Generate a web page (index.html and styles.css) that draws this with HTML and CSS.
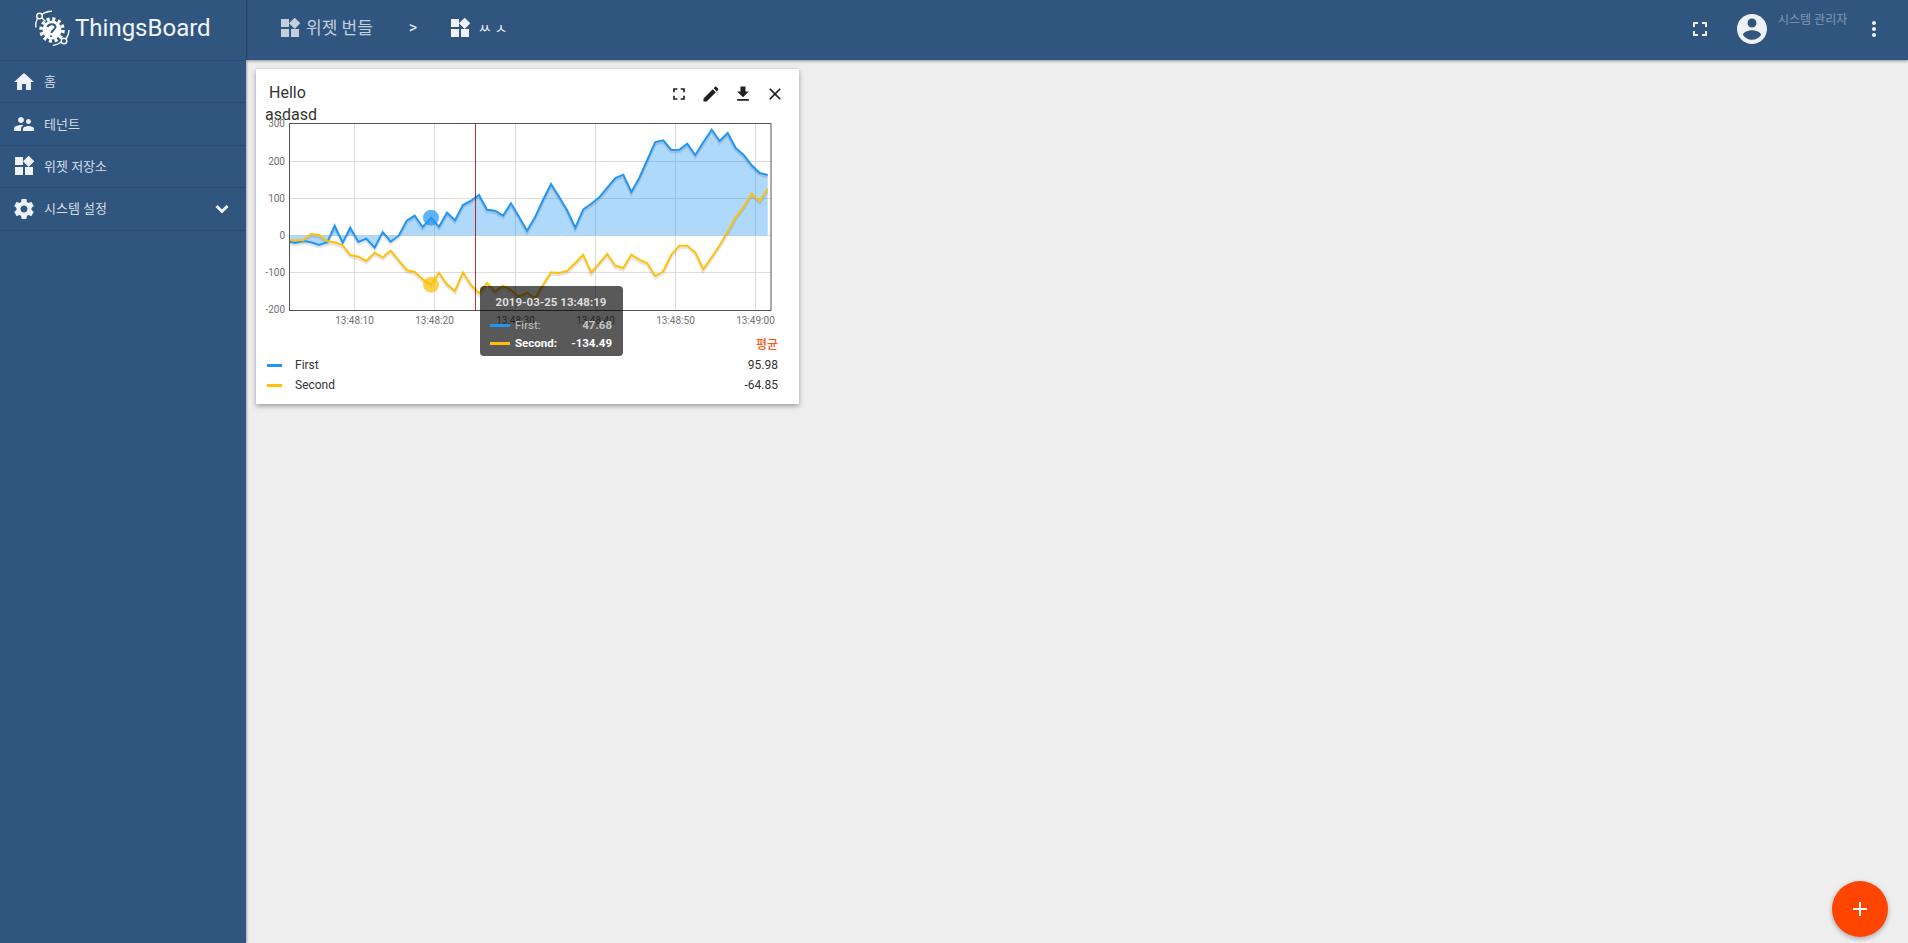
FILE: index.html
```html
<!DOCTYPE html>
<html lang="ko">
<head>
  <meta charset="UTF-8">
  <title>ThingsBoard</title>
  <link rel="stylesheet" href="styles.css">
</head>
<body>
  <aside class="sidebar">
    <div class="logo">
      <svg class="logo-mark" viewBox="30 5 44 42" width="44" height="42">
        <circle cx="52" cy="28" r="9.5" fill="#fff"/>
        <circle cx="52" cy="28" r="11" fill="none" stroke="#fff" stroke-width="3.5" stroke-dasharray="3 2.76"/>
        <path d="M47.5 25c1-3 7-4 8 -.5 .8 3 -4 3.5 -4 6.5M51 33.5v1.5" fill="none" stroke="#305680" stroke-width="2"/>
        <circle cx="39.5" cy="14" r="2.8" fill="none" stroke="#fff" stroke-width="1.4"/>
        <path d="M42 12.5c3-2.4 6-3 10-3.2M37.6 16c-1.600 3-2.400 6-1.800 9.500M42 16l3.500 3.500" fill="none" stroke="#fff" stroke-width="1.400"/>
        <circle cx="64" cy="39" r="2.800" fill="none" stroke="#fff" stroke-width="1.400"/>
        <path d="M61.300 40c-2.500 2-5 3-8.500 3.400M66 37c2-3 3-5.500 3-9M61.500 37l-3-2.500" fill="none" stroke="#fff" stroke-width="1.400"/>
      </svg>
      <span class="logo-text">ThingsBoard</span>
    </div>
    <nav class="menu">
      <a class="menu-item">
        <svg class="icon" viewBox="0 0 24 24"><path d="M10 20v-6h4v6h5v-8h3L12 3 2 12h3v8z"/></svg>
        <span>홈</span>
      </a>
      <a class="menu-item">
        <svg class="icon" viewBox="0 0 24 24"><path d="M16.500 12c1.380 0 2.490-1.120 2.490-2.500S17.880 7 16.500 7C15.120 7 14 8.120 14 9.500s1.120 2.500 2.500 2.500zM9 11c1.660 0 2.990-1.340 2.990-3S10.660 5 9 5C7.340 5 6 6.340 6 8s1.340 3 3 3zm7.500 3c-1.830 0-5.500.92-5.500 2.750V19h11v-2.250c0-1.830-3.670-2.750-5.500-2.750zM9 13c-2.330 0-7 1.170-7 3.500V19h7v-2.250c0-.85.33-2.340 2.370-3.470C10.500 13.100 9.660 13 9 13z"/></svg>
        <span>테넌트</span>
      </a>
      <a class="menu-item">
        <svg class="icon" viewBox="0 0 24 24"><path d="M13 13v8h8v-8h-8zM3 21h8v-8H3v8zM3 3v8h8V3H3zm13.660-1.310L11 7.340 16.660 13l5.660-5.660-5.660-5.650z"/></svg>
        <span>위젯 저장소</span>
      </a>
      <a class="menu-item">
        <svg class="icon" viewBox="0 0 24 24"><path d="M19.430 12.980c.04-.32.07-.64.07-.98s-.03-.66-.07-.98l2.110-1.650c.19-.15.24-.42.12-.64l-2-3.460c-.12-.22-.39-.3-.61-.22l-2.490 1c-.52-.4-1.080-.73-1.690-.98l-.38-2.650C14.460 2.180 14.250 2 14 2h-4c-.25 0-.46.18-.49.42l-.38 2.650c-.61.25-1.170.59-1.690.98l-2.490-1c-.23-.09-.49 0-.61.22l-2 3.460c-.13.22-.07.49.12.64l2.110 1.650c-.04.32-.07.65-.07.98s.03.66.07.98l-2.110 1.650c-.19.15-.24.42-.12.64l2 3.460c.12.22.39.3.61.22l2.490-1c.52.4 1.080.73 1.690.98l.38 2.650c.03.24.24.42.49.42h4c.25 0 .46-.18.49-.42l.38-2.650c.61-.25 1.170-.59 1.690-.98l2.490 1c.23.09.49 0 .61-.22l2-3.460c.12-.22.07-.49-.12-.64l-2.110-1.650zM12 15.500c-1.930 0-3.500-1.570-3.500-3.500s1.570-3.500 3.500-3.500 3.500 1.570 3.500 3.500-1.570 3.500-3.500 3.500z"/></svg>
        <span>시스템 설정</span>
        <svg class="chevron" viewBox="0 0 14 10" width="14" height="10"><path d="M1.500 2l5.500 5.500L12.500 2" fill="none" stroke="#eef1f5" stroke-width="3"/></svg>
      </a>
    </nav>
  </aside>

  <div class="main">
    <header class="topbar">
      <svg class="icon crumb-icon dim" viewBox="0 0 24 24"><path d="M13 13v8h8v-8h-8zM3 21h8v-8H3v8zM3 3v8h8V3H3zm13.660-1.310L11 7.340 16.660 13l5.660-5.660-5.660-5.650z"/></svg>
      <span class="crumb dim-text">위젯 번들</span>
      <span class="crumb-sep">&gt;</span>
      <svg class="icon crumb-icon" viewBox="0 0 24 24"><path d="M13 13v8h8v-8h-8zM3 21h8v-8H3v8zM3 3v8h8V3H3zm13.660-1.310L11 7.340 16.660 13l5.660-5.660-5.660-5.650z"/></svg>
      <span class="crumb crumb-current">ㅆ ㅅ</span>

      <div class="topbar-right">
        <svg class="icon" viewBox="0 0 24 24"><path d="M7 14H5v5h5v-2H7v-3zm-2-4h2V7h3V5H5v5zm12 7h-3v2h5v-5h-2v3zM14 5v2h3v3h2V5h-5z"/></svg>
        <svg class="icon avatar" viewBox="0 0 24 24"><path d="M12 2C6.480 2 2 6.480 2 12s4.480 10 10 10 10-4.480 10-10S17.520 2 12 2zm0 3c1.660 0 3 1.340 3 3s-1.340 3-3 3-3-1.340-3-3 1.340-3 3-3zm0 14.200c-2.500 0-4.710-1.280-6-3.220.03-1.990 4-3.080 6-3.080 1.990 0 5.970 1.090 6 3.080-1.290 1.940-3.500 3.220-6 3.220z"/></svg>
        <span class="user-name">시스템 관리자</span>
        <svg class="icon more" viewBox="0 0 24 24"><path d="M12 8c1.100 0 2-.9 2-2s-.9-2-2-2-2 .9-2 2 .9 2 2 2zm0 2c-1.100 0-2 .9-2 2s.9 2 2 2 2-.9 2-2-.9-2-2-2zm0 6c-1.100 0-2 .9-2 2s.9 2 2 2 2-.9 2-2-.9-2-2-2z"/></svg>
      </div>
    </header>

    <section class="content">
      <article class="widget">
        <div class="widget-head">
          <div class="widget-title">
            <div class="title-main">Hello</div>
            <div class="title-sub">asdasd</div>
          </div>
          <div class="widget-actions">
            <button class="action"><svg viewBox="0 0 24 24"><path d="M7 14H5v5h5v-2H7v-3zm-2-4h2V7h3V5H5v5zm12 7h-3v2h5v-5h-2v3zM14 5v2h3v3h2V5h-5z"/></svg></button>
            <button class="action"><svg viewBox="0 0 24 24"><path d="M3 17.250V21h3.750L17.810 9.940l-3.750-3.750L3 17.250zM20.710 7.040c.39-.39.39-1.020 0-1.410l-2.340-2.340c-.39-.39-1.020-.39-1.410 0l-1.830 1.830 3.750 3.750 1.830-1.830z"/></svg></button>
            <button class="action"><svg viewBox="0 0 24 24"><path d="M19 9h-4V3H9v6H5l7 7 7-7zM5 18v2h14v-2H5z"/></svg></button>
            <button class="action"><svg viewBox="0 0 24 24"><path d="M19 6.410L17.590 5 12 10.590 6.410 5 5 6.410 10.590 12 5 17.590 6.410 19 12 13.410 17.590 19 19 17.590 13.410 12z"/></svg></button>
          </div>
        </div>

        <!-- viewBox uses page coordinates so the points read like the screen -->
        <svg class="chart" viewBox="256 115 543 215" width="543" height="215">
          <defs>
            <polyline id="lineFirst" fill="none" points="289.3,241.700 295,243 303.300,241 311,242.300 319,245 327.300,242.300 334.700,225.700 342.700,242.700 350.300,227.700 358.300,242 366.300,238.700 374.700,247.700 382.700,232 390.700,241.700 398.700,235.700 406.700,220.700 414.700,215.700 422.700,227 431,217.700 439,226.700 447,212.700 455,220.300 463,205 471,200.700 479,195 487,209.700 495,210.700 503,215.700 511,203.300 519,216.700 527,230.700 535,217.300 543,200 551,184 559,196.700 567,210 575.300,227.700 583.300,209.300 591.300,203.700 599.300,197.300 607.300,187.700 615.300,178 623.300,174.700 631.300,192 639.300,178 647.300,160 655.300,142 663.300,140.300 671.300,150 679.300,149.700 687.300,143.700 695.300,155 703.300,142.300 711.700,129.700 719.700,141 727.700,133 735.700,148 743.700,155 751.700,165.300 759.700,173 767.700,175"/>
            <polyline id="lineSecond" fill="none" points="289.3,240.300 295,240.300 303.300,240.300 311,234 319,235 327.300,241 334.700,242.300 342.700,245 350.300,255 358.300,256.700 366.300,261 374.700,252.700 382.700,257.300 390.700,250.700 398.700,260.300 406.700,270 414.700,272 422.700,279.300 431,284.700 439,272.700 447,284.300 455,291 463,272.300 471,285 479,293.300 487,283 495,291.700 503,285.700 511,290 519,296.700 527,292.700 535,298.300 543,285 551,272.300 559,273 567,271 575.300,263 583.300,254.700 591.300,272.700 599.300,263.300 607.300,254 615.300,265.700 623.300,268 631.300,254.700 639.300,259.700 647.300,263.300 655.300,276 663.300,271.300 671.300,254.700 679.300,245.700 687.300,245.700 695.300,252.300 703.300,269.300 711.700,257.300 719.700,245.300 727.700,231.700 735.700,217.300 743.700,206.700 751.700,193.700 759.700,201 767.700,188.700"/>
          </defs>

          <g class="grid">
            <path d="M354.500 123.500V310.500M434.500 123.500V310.500M515.500 123.500V310.500M595.500 123.500V310.500M675.500 123.500V310.500M755.500 123.500V310.500"/>
            <path d="M289.500 161.500H771M289.500 198.500H771M289.500 235.500H771M289.500 272.500H771"/>
          </g>

          <polygon class="area" points="289.3,235.500 289.3,241.700 295,243 303.300,241 311,242.300 319,245 327.300,242.300 334.700,225.700 342.700,242.700 350.300,227.700 358.300,242 366.300,238.700 374.700,247.700 382.700,232 390.700,241.700 398.700,235.700 406.700,220.700 414.700,215.700 422.700,227 431,217.700 439,226.700 447,212.700 455,220.300 463,205 471,200.700 479,195 487,209.700 495,210.700 503,215.700 511,203.300 519,216.700 527,230.700 535,217.300 543,200 551,184 559,196.700 567,210 575.300,227.700 583.300,209.300 591.300,203.700 599.300,197.300 607.300,187.700 615.300,178 623.300,174.700 631.300,192 639.300,178 647.300,160 655.300,142 663.300,140.300 671.300,150 679.300,149.700 687.300,143.700 695.300,155 703.300,142.300 711.700,129.700 719.700,141 727.700,133 735.700,148 743.700,155 751.700,165.300 759.700,173 767.700,175 767.700,235.500"/>

          <use href="#lineFirst" class="line-shadow"/>
          <use href="#lineSecond" class="line-shadow"/>
          <use href="#lineFirst" class="line-first"/>
          <use href="#lineSecond" class="line-second"/>

          <rect class="frame" x="289.500" y="123.500" width="481.500" height="187"/>
          <line class="crosshair" x1="475.500" y1="123.500" x2="475.500" y2="310.500"/>

          <circle class="dot-first" cx="431" cy="217.700" r="8"/>
          <circle class="dot-second" cx="431" cy="284.700" r="8"/>

          <g class="tick tick-y">
            <text x="285" y="127">300</text>
            <text x="285" y="164.500">200</text>
            <text x="285" y="201.500">100</text>
            <text x="285" y="239">0</text>
            <text x="285" y="276">-100</text>
            <text x="285" y="313">-200</text>
          </g>
          <g class="tick tick-x">
            <text x="354.500" y="324">13:48:10</text>
            <text x="434.500" y="324">13:48:20</text>
            <text x="515.500" y="324">13:48:30</text>
            <text x="595.500" y="324">13:48:40</text>
            <text x="675.500" y="324">13:48:50</text>
            <text x="755.500" y="324">13:49:00</text>
          </g>
        </svg>

        <div class="legend">
          <div class="legend-head">평균</div>
          <div class="legend-row">
            <i class="swatch swatch-first"></i>
            <span class="legend-name">First</span>
            <span class="legend-value">95.98</span>
          </div>
          <div class="legend-row">
            <i class="swatch swatch-second"></i>
            <span class="legend-name">Second</span>
            <span class="legend-value">-64.85</span>
          </div>
        </div>

        <div class="tooltip">
          <div class="tooltip-time">2019-03-25 13:48:19</div>
          <div class="tooltip-row tooltip-row-dim">
            <i class="swatch swatch-first"></i>
            <span>First:</span>
            <b>47.68</b>
          </div>
          <div class="tooltip-row">
            <i class="swatch swatch-second"></i>
            <b>Second:</b>
            <b>-134.49</b>
          </div>
        </div>
      </article>
    </section>
  </div>

  <button class="fab"><svg viewBox="0 0 14 14" width="14" height="14"><path d="M6 0h2v6h6v2H8v6H6V8H0V6h6z"/></svg></button>
</body>
</html>
```

FILE: styles.css
```css
/* page */
html, body {
  height: 100%;
}
body {
  margin: 0;
  display: flex;
  height: 943px;
  overflow: hidden;
  background-color: #eeeeee;
  font-family: Roboto, "Noto Sans CJK KR", sans-serif;
  color: #212121;
}

.icon {
  width: 24px;
  height: 24px;
  fill: #eef1f5;
  flex: none;
}

/* sidebar */
.sidebar {
  width: 246px;
  flex: none;
  background-color: #305680;
  box-shadow: 1px 0 2px rgba(0, 0, 0, 0.3);
  z-index: 2;
}
.logo {
  height: 60px;
  display: flex;
  align-items: center;
  padding-left: 30px;
  border-bottom: 1px solid #2a4c72;
}
.logo-mark {
  flex: none;
  margin-top: -4px;
}
.logo-text {
  margin-left: 1px;
  margin-top: -5px;
  font-size: 24px;
  color: #f1f4f7;
}
.menu-item {
  height: 41.400px;
  display: flex;
  align-items: center;
  padding-left: 12px;
  border-bottom: 1px solid #2a4c72;
  font-size: 13px;
  color: #d5dce5;
}
.menu-item span {
  margin-left: 8px;
  margin-top: -2px;
}
.chevron {
  margin-left: auto;
  margin-right: 17px;
}

/* top bar */
.main {
  flex: 1;
  min-width: 0;
  display: flex;
  flex-direction: column;
}
.topbar {
  height: 60px;
  flex: none;
  display: flex;
  align-items: center;
  padding-left: 32px;
  padding-bottom: 2px;
  box-sizing: border-box;
  background-color: #305680;
  box-shadow: 0 1px 3px rgba(0, 0, 0, 0.4);
  z-index: 1;
}
.crumb-icon {
  margin-top: -3px;
}
.dim {
  fill: #c3cfdc;
}
.crumb {
  margin-left: 4px;
  margin-top: -5px;
  font-size: 17px;
}
.dim-text {
  color: #c3cfdc;
}
.crumb-sep {
  margin: -3px 31px 0 36px;
  font-size: 16px;
  color: #eef1f5;
}
.crumb-current {
  margin-left: 6px;
  font-size: 14px;
  color: #eef1f5;
}
.topbar-right {
  margin-left: auto;
  display: flex;
  align-items: center;
  padding-right: 22px;
}
.avatar {
  width: 36px;
  height: 36px;
  margin-left: 22px;
}
.user-name {
  margin-left: 8px;
  margin-top: -21px;
  width: 84px;
  font-size: 12px;
  color: #8298b2;
}

/* widget */
.content {
  flex: 1;
  padding: 9px 10px;
}
.widget {
  position: relative;
  width: 543px;
  height: 335px;
  background-color: #fff;
  box-shadow: 0 2px 5px rgba(0, 0, 0, 0.35);
}
.widget-head {
  height: 46px;
  display: flex;
  justify-content: space-between;
  padding-right: 8px;
}
.widget-title {
  padding-top: 13px;
  font-size: 16px;
  line-height: 22px;
  color: #333;
}
.title-main {
  margin-left: 13px;
}
.title-sub {
  margin-left: 9px;
}
.widget-actions {
  display: flex;
  padding-top: 9px;
}
.action {
  width: 32px;
  height: 32px;
  padding: 6px;
  border: none;
  background: none;
}
.action svg {
  display: block;
  width: 20px;
  height: 20px;
  fill: #212121;
}

/* chart */
.chart {
  display: block;
  position: relative;
}
.grid path {
  fill: none;
  stroke: #dcdcdc;
  stroke-width: 1;
}
.area {
  fill: rgba(33, 150, 243, 0.36);
}
.line-shadow {
  stroke: rgba(0, 0, 0, 0.1);
  stroke-width: 3;
  transform: translate(0, 2px);
}
.line-first {
  stroke: #2196f3;
  stroke-width: 2;
}
.line-second {
  stroke: #ffc107;
  stroke-width: 2;
}
.frame {
  fill: none;
  stroke: #545454;
  stroke-width: 1;
}
.crosshair {
  stroke: rgba(170, 0, 0, 0.8);
  stroke-width: 1;
}
.dot-first {
  fill: rgba(33, 150, 243, 0.72);
}
.dot-second {
  fill: rgba(255, 193, 7, 0.72);
}
.tick text {
  font-family: Roboto, sans-serif;
  font-size: 10px;
  fill: #6f6f6f;
}
.tick-y text {
  text-anchor: end;
}
.tick-x text {
  text-anchor: middle;
}

/* legend */
.legend {
  padding: 5px 21px 0 11px;
  font-size: 12px;
  color: #333;
}
.legend-head {
  height: 20px;
  line-height: 20px;
  text-align: right;
  font-weight: 500;
  color: #ff5722;
}
.legend-row {
  height: 20px;
  display: flex;
  align-items: center;
}
.swatch {
  display: block;
  flex: none;
  width: 15px;
  height: 3px;
}
.swatch-first {
  background-color: #2196f3;
}
.swatch-second {
  background-color: #ffc107;
}
.legend-name {
  margin-left: 13px;
}
.legend-value {
  margin-left: auto;
}

/* tooltip over the chart */
.tooltip {
  position: absolute;
  left: 224px;
  top: 217px;
  width: 143px;
  height: 70px;
  box-sizing: border-box;
  padding: 0 11px 0 10px;
  border-radius: 4px;
  background-color: rgba(0, 0, 0, 0.65);
  font-size: 11.500px;
  color: #fff;
}
.tooltip-time {
  height: 30px;
  line-height: 32px;
  text-align: center;
  font-weight: 700;
  color: #ddd;
}
.tooltip-row {
  height: 18px;
  display: flex;
  align-items: center;
  justify-content: space-between;
}
.tooltip-row .swatch {
  width: 20px;
}
.tooltip-row span,
.tooltip-row b:nth-of-type(1) {
  margin-left: 5px;
}
.tooltip-row b:last-child {
  margin-left: auto;
}
.tooltip-row-dim {
  color: #c4c4c4;
}

/* add button */
.fab {
  position: absolute;
  right: 20px;
  bottom: 6px;
  width: 56px;
  height: 56px;
  padding: 0;
  border: none;
  border-radius: 50%;
  background-color: #ff4500;
  box-shadow: 0 2px 5px rgba(0, 0, 0, 0.3);
  display: flex;
  align-items: center;
  justify-content: center;
}
.fab svg {
  fill: #fff;
}
```
